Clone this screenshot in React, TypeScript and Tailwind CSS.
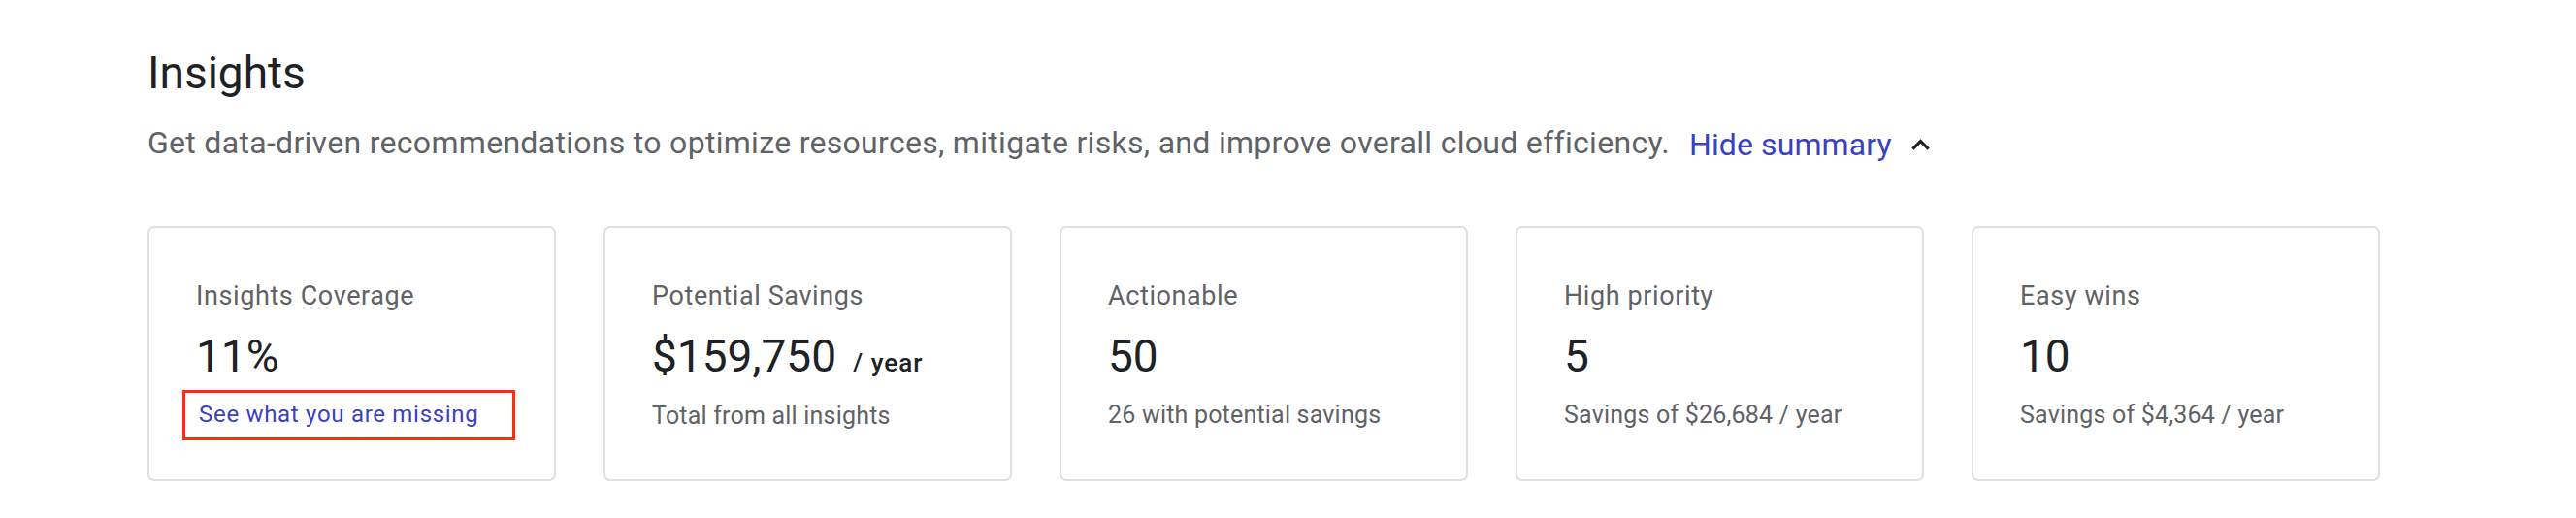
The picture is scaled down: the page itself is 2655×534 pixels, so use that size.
const cards = [
  { label: "Insights Coverage", value: "11%", link: "See what you are missing" },
  { label: "Potential Savings", value: "$159,750", unit: "/ year", sub: "Total from all insights" },
  { label: "Actionable", value: "50", sub: "26 with potential savings" },
  { label: "High priority", value: "5", sub: "Savings of $26,684 / year" },
  { label: "Easy wins", value: "10", sub: "Savings of $4,364 / year" },
];

function SummaryCard({
  label,
  value,
  unit,
  sub,
  link,
}: {
  label: string;
  value: string;
  unit?: string;
  sub?: string;
  link?: string;
}) {
  return (
    <div className="w-[421px] h-[263px] shrink-0 rounded-[7px] border-2 border-[#e0e0e0] bg-white pl-[48px] pt-[54px]">
      <div className="text-[27px] leading-[32px] tracking-[0.6px] text-[#5f6368]">{label}</div>
      <div className="mt-[20px] flex items-baseline text-[#202124]">
        <span className="text-[46px] leading-[52px]">{value}</span>
        {unit ? <span className="ml-[17px] text-[26px] font-medium tracking-[1px]">{unit}</span> : null}
      </div>
      {link ? (
        <div className="mt-[9px] -ml-[14px] w-[343px] h-[52px] border-[3px] border-[#ff2b12] flex items-center pl-[14px] pb-[2px]">
          <span className="text-[24px] tracking-[0.7px] text-[#3b3fc2]">{link}</span>
        </div>
      ) : (
        <div className="mt-[21px] text-[25px] leading-[28px] tracking-[0.2px] text-[#5f6368]">{sub}</div>
      )}
    </div>
  );
}

export default function App() {
  return (
    <div className="w-[2655px] h-[534px] bg-white pl-[152px] pt-[47px] font-['Roboto',sans-serif]">
      <h1 className="text-[46px] leading-[56px] text-[#202124]">Insights</h1>
      <div className="mt-[24px] flex items-center h-[40px]">
        <span className="text-[32px] leading-[40px] tracking-[0.3px] text-[#5f6368]">
          Get data-driven recommendations to optimize resources, mitigate risks, and improve overall cloud efficiency.
        </span>
        <span className="ml-[20px] mt-[3px] text-[32px] leading-[40px] tracking-[0.1px] text-[#3b3fc2]">Hide summary</span>
        <svg viewBox="0 0 24 24" className="ml-[11px] w-[37px] h-[37px] mt-[4px]" fill="#202124">
          <path d="M12 8l-6 6 1.41 1.41L12 10.83l4.59 4.58L18 14z" />
        </svg>
      </div>
      <div className="mt-[66px] flex gap-[49px]">
        {cards.map((c) => (
          <SummaryCard key={c.label} {...c} />
        ))}
      </div>
    </div>
  );
}
